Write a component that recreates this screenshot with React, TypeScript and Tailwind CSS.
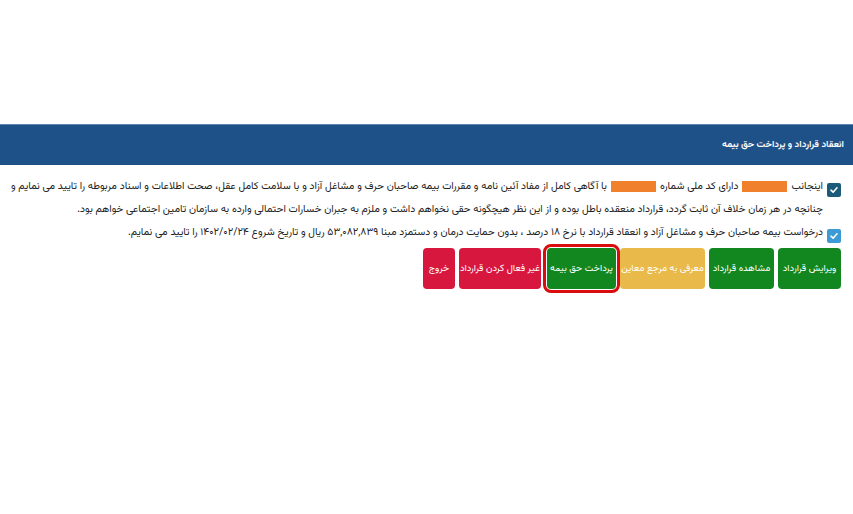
import React from "react";

const Check = ({ color }: { color: string }) => (
  <span
    className="inline-flex items-center justify-center w-[14px] h-[14px] rounded-[2px] shrink-0 align-middle"
    style={{ backgroundColor: color }}
  >
    <svg width="10" height="10" viewBox="0 0 10 10" fill="none">
      <path d="M2 5.2 L4.1 7.2 L8 2.8" stroke="white" strokeWidth="1.6" strokeLinecap="round" strokeLinejoin="round" />
    </svg>
  </span>
);

const Orange = () => <span className="inline-block w-[45px] h-[11px] bg-[#f0802c] align-middle mx-[4px]" />;

export default function App() {
  return (
    <div
      dir="rtl"
      className="w-[853px] h-[514px] bg-white overflow-hidden font-['Vazirmatn','Noto_Sans_Arabic','DejaVu_Sans_Condensed','DejaVu_Sans',sans-serif]"
    >
      <div className="h-[124px]" />
      <div className="h-[41px] bg-[#1f5189] border-t border-[#5f86b3] flex items-center pr-[9px] text-white text-[9.5px] font-semibold">
        انعقاد قرارداد و پرداخت حق بیمه
      </div>
      <div className="pr-[12px] pl-[4px] pt-[10px] text-[10.4px] text-[#222] leading-[23px]">
        <div className="flex items-start gap-[4px]">
          <div className="pt-[4px]"><Check color="#1c5a7a" /></div>
          <div className="whitespace-nowrap">
            اینجانب<Orange />دارای کد ملی شماره<Orange />با آگاهی کامل از مفاد آئین نامه و مقررات بیمه صاحبان حرف و مشاغل آزاد و با سلامت کامل عقل، صحت اطلاعات و اسناد مربوطه را تایید می نمایم و
            <br />
            چنانچه در هر زمان خلاف آن ثابت گردد، قرارداد منعقده باطل بوده و از این نظر هیچگونه حقی نخواهم داشت و ملزم به جبران خسارات احتمالی وارده به سازمان تامین اجتماعی خواهم بود.
          </div>
        </div>
        <div className="flex items-start gap-[4px]">
          <div className="pt-[4px]"><Check color="#3c9bd5" /></div>
          <div className="whitespace-nowrap">
            درخواست بیمه صاحبان حرف و مشاغل آزاد و انعقاد قرارداد با نرخ ۱۸ درصد ، بدون حمایت درمان و دستمزد مبنا ۵۳,۰۸۲,۸۳۹ ریال و تاریخ شروع ۱۴۰۲/۰۲/۲۴ را تایید می نمایم.
          </div>
        </div>
        <div className="flex gap-[4px] mt-[0px] text-white text-[9.5px] whitespace-nowrap">
          <div className="w-[63px] h-[41px] rounded-[4px] bg-[#12871f] flex items-center justify-center">ویرایش قرارداد</div>
          <div className="w-[65px] h-[41px] rounded-[4px] bg-[#12871f] flex items-center justify-center">مشاهده قرارداد</div>
          <div className="w-[85px] h-[41px] rounded-[4px] bg-[#e9b949] flex items-center justify-center">معرفی به مرجع معاین</div>
          <div className="w-[69px] h-[41px] rounded-[4px] bg-[#12871f] flex items-center justify-center outline-[3px] outline-solid outline-[#d90d0d] outline-offset-[1px] ml-[2px]">پرداخت حق بیمه</div>
          <div className="w-[82px] h-[41px] rounded-[4px] bg-[#d8173f] flex items-center justify-center">غیر فعال کردن قرارداد</div>
          <div className="w-[32px] h-[41px] rounded-[4px] bg-[#d8173f] flex items-center justify-center">خروج</div>
        </div>
      </div>
    </div>
  );
}
